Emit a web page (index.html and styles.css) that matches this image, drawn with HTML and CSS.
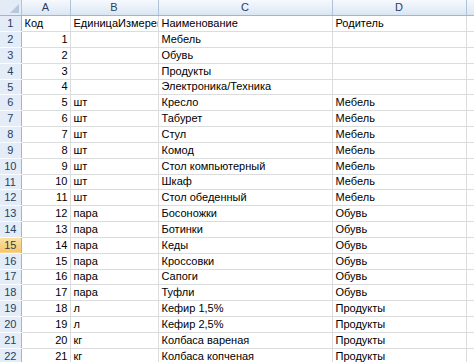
FILE: index.html
```html
<!DOCTYPE html>
<html lang="ru">
<head>
  <meta charset="UTF-8">
  <title>Справочник номенклатуры</title>
  <link rel="stylesheet" href="styles.css">
</head>
<body>
<table class="sheet">
  <colgroup>
    <col class="w-num"><col class="w-a"><col class="w-b"><col class="w-c"><col class="w-d"><col class="w-e">
  </colgroup>
  <thead>
    <tr class="head">
      <th class="corner"><span class="tri"></span></th>
      <th>A</th><th>B</th><th>C</th><th>D</th><th class="last"></th>
    </tr>
  </thead>
  <tbody>
    <tr><th>1</th><td>Код</td><td>ЕдиницаИзмерения</td><td>Наименование</td><td>Родитель</td><td></td></tr>
    <tr><th>2</th><td class="n">1</td><td></td><td>Мебель</td><td></td><td></td></tr>
    <tr><th>3</th><td class="n">2</td><td></td><td>Обувь</td><td></td><td></td></tr>
    <tr><th>4</th><td class="n">3</td><td></td><td>Продукты</td><td></td><td></td></tr>
    <tr><th>5</th><td class="n">4</td><td></td><td>Электроника/Техника</td><td></td><td></td></tr>
    <tr><th>6</th><td class="n">5</td><td>шт</td><td>Кресло</td><td>Мебель</td><td></td></tr>
    <tr><th>7</th><td class="n">6</td><td>шт</td><td>Табурет</td><td>Мебель</td><td></td></tr>
    <tr><th>8</th><td class="n">7</td><td>шт</td><td>Стул</td><td>Мебель</td><td></td></tr>
    <tr><th>9</th><td class="n">8</td><td>шт</td><td>Комод</td><td>Мебель</td><td></td></tr>
    <tr><th>10</th><td class="n">9</td><td>шт</td><td>Стол компьютерный</td><td>Мебель</td><td></td></tr>
    <tr><th>11</th><td class="n">10</td><td>шт</td><td>Шкаф</td><td>Мебель</td><td></td></tr>
    <tr><th>12</th><td class="n">11</td><td>шт</td><td>Стол обеденный</td><td>Мебель</td><td></td></tr>
    <tr><th>13</th><td class="n">12</td><td>пара</td><td>Босоножки</td><td>Обувь</td><td></td></tr>
    <tr><th>14</th><td class="n">13</td><td>пара</td><td>Ботинки</td><td>Обувь</td><td></td></tr>
    <tr class="active"><th>15</th><td class="n">14</td><td>пара</td><td>Кеды</td><td>Обувь</td><td></td></tr>
    <tr><th>16</th><td class="n">15</td><td>пара</td><td>Кроссовки</td><td>Обувь</td><td></td></tr>
    <tr><th>17</th><td class="n">16</td><td>пара</td><td>Сапоги</td><td>Обувь</td><td></td></tr>
    <tr><th>18</th><td class="n">17</td><td>пара</td><td>Туфли</td><td>Обувь</td><td></td></tr>
    <tr><th>19</th><td class="n">18</td><td>л</td><td>Кефир 1,5%</td><td>Продукты</td><td></td></tr>
    <tr><th>20</th><td class="n">19</td><td>л</td><td>Кефир 2,5%</td><td>Продукты</td><td></td></tr>
    <tr><th>21</th><td class="n">20</td><td>кг</td><td>Колбаса вареная</td><td>Продукты</td><td></td></tr>
    <tr><th>22</th><td class="n">21</td><td>кг</td><td>Колбаса копченая</td><td>Продукты</td><td></td></tr>
  </tbody>
</table>
</body>
</html>
```
FILE: styles.css
```css
body {
    margin: 0;
    padding: 0;
    background: #fff;
    font-family: "Liberation Sans", Arial, sans-serif;
    font-size: 11px;
    color: #000;
    overflow: hidden;
}

.sheet {
    border-collapse: collapse;
    table-layout: fixed;
    width: 474px;
}

.w-num { width: 21px; }
.w-a { width: 49px; }
.w-b { width: 88px; }
.w-c { width: 174px; }
.w-d { width: 134px; }
.w-e { width: 8px; }

.sheet tr {
    height: 15.83px;
}

.sheet td {
    padding: 0 2px 1px 3px;
    border-right: 1px solid #dadcdd;
    border-bottom: 1px solid #dadcdd;
    white-space: nowrap;
    overflow: hidden;
    vertical-align: bottom;
    line-height: 13px;
}

.sheet td.n {
    text-align: right;
}

/* column headers */
.head {
    height: 15px;
}

.head th {
    background: linear-gradient(#f6f9fd, #dbe6f3);
    border-right: 1px solid #b1c4da;
    border-bottom: 1px solid #9eb6ce;
    font-weight: normal;
    color: #27415f;
    padding: 0;
    line-height: 13px;
}

.head th.last {
    border-right: none;
}

.head th.corner {
    position: relative;
    background: #e3ebf6;
}

.tri {
    position: absolute;
    right: 2px;
    bottom: 2px;
    width: 0;
    height: 0;
    border-left: 9px solid transparent;
    border-bottom: 9px solid #b8c8dc;
}

/* row numbers */
tbody th {
    background: #e4ecf7;
    border-right: 1px solid #9eb6ce;
    border-bottom: 1px solid #fafcff;
    font-weight: normal;
    color: #27415f;
    padding: 0;
    line-height: 13px;
    text-align: center;
}

tbody tr.active th {
    background: linear-gradient(#fbe2a8, #f6c46b);
    color: #3b3b3b;
}
```
